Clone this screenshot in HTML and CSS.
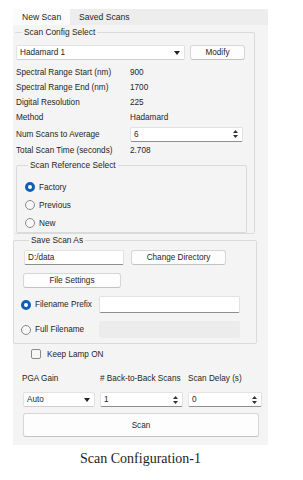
FILE: index.html
```html
<!DOCTYPE html>
<html lang="en">
  <head>
    <meta charset="UTF-8" />
    <meta name="viewport" content="width=device-width, initial-scale=1.0" />
    <title>Scan Configuration</title>
    <link rel="stylesheet" href="styles.css">
  </head>

  <body>
    <div class="panel">
      <div class="tabs">
        <div class="tab active">New Scan</div>
        <div class="tab">Saved Scans</div>
      </div>

      <fieldset class="group config">
        <legend>Scan Config Select</legend>
        <div class="row top-row">
          <div class="combo config-combo">
            <span>Hadamard 1</span>
            <svg class="arrow" width="6" height="4" viewBox="0 0 6 4"><path d="M0 0H6L3 4Z" fill="#222"/></svg>
          </div>
          <div class="btn modify">Modify</div>
        </div>
        <div class="info"><span class="key">Spectral Range Start (nm)</span><span>900</span></div>
        <div class="info"><span class="key">Spectral Range End (nm)</span><span>1700</span></div>
        <div class="info"><span class="key">Digital Resolution</span><span>225</span></div>
        <div class="info"><span class="key">Method</span><span>Hadamard</span></div>
        <div class="info spin-row">
          <span class="key">Num Scans to Average</span>
          <div class="field spin avg-spin">
            <span>6</span>
            <svg width="5" height="8" viewBox="0 0 5 8"><path d="M0 3L2.5 0L5 3ZM0 5L2.5 8L5 5Z" fill="#333"/></svg>
          </div>
        </div>
        <div class="info"><span class="key">Total Scan Time (seconds)</span><span>2.708</span></div>

        <fieldset class="group reference">
          <legend>Scan Reference Select</legend>
          <div class="radio-row"><span class="radio checked"></span>Factory</div>
          <div class="radio-row"><span class="radio"></span>Previous</div>
          <div class="radio-row"><span class="radio"></span>New</div>
        </fieldset>
      </fieldset>

      <fieldset class="group save">
        <legend>Save Scan As</legend>
        <div class="row dir-row">
          <div class="field dir">D:/data</div>
          <div class="btn change-dir">Change Directory</div>
        </div>
        <div class="btn file-settings">File Settings</div>
        <div class="row name-row">
          <span class="radio checked"></span>
          <span class="name-label">Filename Prefix</span>
          <div class="field name-input"></div>
        </div>
        <div class="row name-row">
          <span class="radio"></span>
          <span class="name-label">Full Filename</span>
          <div class="field name-input disabled"></div>
        </div>
      </fieldset>

      <div class="lamp-row"><span class="checkbox"></span>Keep Lamp ON</div>

      <div class="bottom-grid">
        <span>PGA Gain</span>
        <span># Back-to-Back Scans</span>
        <span>Scan Delay (s)</span>
        <div class="combo">
          <span>Auto</span>
          <svg class="arrow" width="6" height="4" viewBox="0 0 6 4"><path d="M0 0H6L3 4Z" fill="#222"/></svg>
        </div>
        <div class="field spin">
          <span>1</span>
          <svg width="5" height="8" viewBox="0 0 5 8"><path d="M0 3L2.5 0L5 3ZM0 5L2.5 8L5 5Z" fill="#333"/></svg>
        </div>
        <div class="field spin">
          <span>0</span>
          <svg width="5" height="8" viewBox="0 0 5 8"><path d="M0 3L2.5 0L5 3ZM0 5L2.5 8L5 5Z" fill="#333"/></svg>
        </div>
      </div>

      <div class="btn scan">Scan</div>
    </div>

    <div class="caption">Scan Configuration-1</div>
  </body>
</html>
```

FILE: styles.css
```css
body {
  margin: 0;
  background-color: #ffffff;
  font-family: "Liberation Sans", Arial, sans-serif;
  font-size: 8.2px;
  color: #262626;
}

.panel {
  width: 255px;
  height: 436px;
  margin: 9px 0 0 13px;
  background-color: #f4f4f4;
}

.tabs {
  display: flex;
  height: 16px;
  background-color: #ededed;
}

.tab {
  padding: 0 7px 0 9px;
  line-height: 16px;
  font-size: 8.6px;
}

.tab.active {
  width: 41px;
  background-color: #fbfbfb;
}

/* group boxes */
.group {
  margin: 0;
  padding: 0;
  border: 1px solid #dadada;
  border-radius: 2px;
  min-width: 0;
  box-sizing: border-box;
}

.group legend {
  padding: 0 2px;
  line-height: 12px;
  font-size: 8.4px;
}

.config {
  width: 241px;
  margin: 1px 0 0 1px;
  padding: 7px 0 0 1px;
  border-left-color: transparent;
}

.config legend {
  margin-left: 6px;
}

.row {
  display: flex;
  align-items: center;
}

.top-row {
  height: 15px;
  margin-bottom: 5px;
}

.combo,
.field {
  display: flex;
  align-items: center;
  justify-content: space-between;
  height: 15px;
  box-sizing: border-box;
  padding: 0 4px 0 3px;
  background-color: #ffffff;
  border: 1px solid #e2e2e2;
  border-bottom-color: #8e8e8e;
  border-radius: 2px;
}

.combo {
  border-bottom-color: #cfcfcf;
}

.config-combo {
  width: 169px;
}

.btn {
  display: flex;
  align-items: center;
  justify-content: center;
  height: 15px;
  box-sizing: border-box;
  background-color: #fdfdfd;
  border: 1px solid #d6d6d6;
  border-bottom-color: #c2c2c2;
  border-radius: 3px;
}

.modify {
  width: 55px;
  margin-left: 5px;
}

.info {
  display: flex;
  align-items: center;
  height: 15px;
}

.info .key {
  width: 114px;
  flex: none;
}

.spin-row {
  height: 18px;
}

.avg-spin {
  width: 113px;
}

.reference {
  width: 231px;
  margin: 1px 0 0 0;
  padding: 7px 0 0 8px;
}

.reference legend {
  margin-left: 3px;
}

.radio-row {
  display: flex;
  align-items: center;
  height: 18px;
}

.radio {
  width: 10px;
  height: 10px;
  flex: none;
  box-sizing: border-box;
  margin-right: 4px;
  border: 1px solid #8a8a8a;
  border-radius: 50%;
  background-color: #f7f7f7;
}

.radio.checked {
  border: 3px solid #0f5fb5;
  background-color: #ffffff;
}

.save {
  width: 244px;
  margin: 0;
  padding: 4px 0 5px 10px;
}

.save legend {
  margin-left: 5px;
}

.dir-row {
  height: 15px;
}

.dir {
  width: 100px;
}

.change-dir {
  width: 95px;
  margin-left: 7px;
}

.file-settings {
  width: 98px;
  margin: 8px 0 0 -1px;
}

.name-row {
  height: 17px;
  margin: 8px 0 0 -3px;
}

.name-label {
  width: 64px;
}

.field.name-input {
  width: 141px;
  height: 17px;
}

.field.name-input.disabled {
  background-color: #ececec;
  border-color: #ececec;
}

.lamp-row {
  display: flex;
  align-items: center;
  height: 12px;
  margin-top: 4px;
  padding-left: 18px;
}

.checkbox {
  width: 10px;
  height: 10px;
  box-sizing: border-box;
  margin-right: 6px;
  border: 1px solid #8a8a8a;
  border-radius: 2px;
  background-color: #f7f7f7;
}

.bottom-grid {
  display: grid;
  grid-template-columns: 72px 83px 74px;
  grid-template-rows: 12px 15px;
  column-gap: 5px;
  row-gap: 8px;
  margin-top: 12px;
  padding-left: 10px;
  align-items: center;
}

.bottom-grid > span:first-child {
  margin-left: -1px;
}

.bottom-grid > span {
  white-space: nowrap;
}

.scan {
  width: 236px;
  height: 24px;
  margin: 6px 0 0 10px;
}

.caption {
  width: 255px;
  margin: 6px 0 0 13px;
  text-align: center;
  font-family: "Liberation Serif", "Times New Roman", serif;
  font-size: 14px;
  line-height: 16px;
  color: #1e1e1e;
}
```
